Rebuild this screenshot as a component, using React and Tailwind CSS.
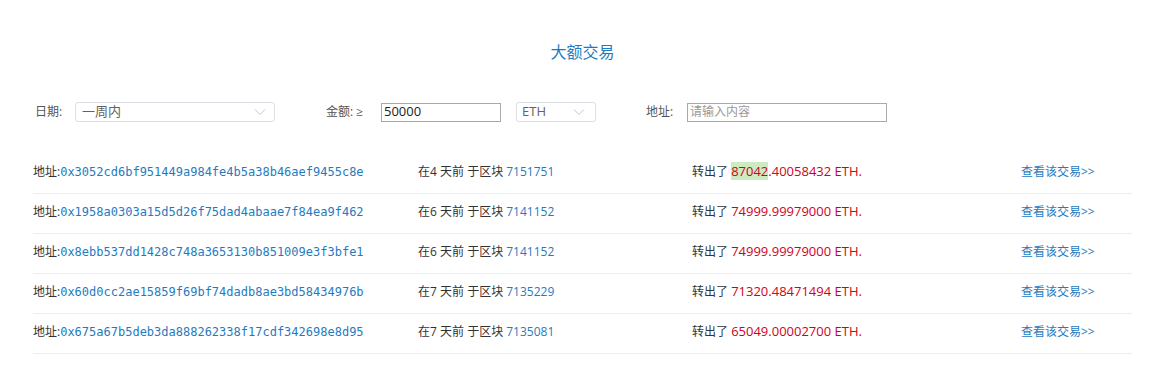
import React from 'react';

const rows = [
    { addr: '0x3052cd6bf951449a984fe4b5a38b46aef9455c8e', days: 4, block: '7151751', hi: '87042', rest: '.40058432 ETH.' },
    { addr: '0x1958a0303a15d5d26f75dad4abaae7f84ea9f462', days: 6, block: '7141152', hi: '', rest: '74999.99979000 ETH.' },
    { addr: '0x8ebb537dd1428c748a3653130b851009e3f3bfe1', days: 6, block: '7141152', hi: '', rest: '74999.99979000 ETH.' },
    { addr: '0x60d0cc2ae15859f69bf74dadb8ae3bd58434976b', days: 7, block: '7135229', hi: '', rest: '71320.48471494 ETH.' },
    { addr: '0x675a67b5deb3da888262338f17cdf342698e8d95', days: 7, block: '7135081', hi: '', rest: '65049.00002700 ETH.' },
];

const cjk = "font-['Open_Sans','Noto_Sans_CJK_SC',sans-serif]";

const Chevron = () => (
    <svg className="w-[12px] h-[8px]" viewBox="0 0 12 8" fill="none" stroke="#c0c4cc" strokeWidth="1">
        <polyline points="1,1.5 6,6.5 11,1.5" />
    </svg>
);

const App = () => {
    return (
        <div className={`bg-white w-[1153px] h-[380px] text-[#333] ${cjk}`}>
            <h1 className="pt-[40px] pl-[12px] text-center text-[16px] leading-[24px] text-[#1f7bc1]">大额交易</h1>

            <div className="mt-[38px] flex items-center h-[20px] text-[12px] text-[#555]">
                <span className="ml-[35px] w-[40px]">日期:</span>
                <div className="w-[200px] h-[20px] border border-[#dcdfe6] rounded-[3px] flex items-center justify-between pl-[6px] pr-[8px] text-[#606266] text-[13px]">
                    <span>一周内</span>
                    <Chevron />
                </div>
                <span className="ml-[51px] w-[55px]">金额: ≥</span>
                <div className="w-[120px] h-[19px] border border-[#a9a9a9] flex items-center pl-[2px] text-[13px] text-[#222]">50000</div>
                <div className="ml-[15px] w-[80px] h-[20px] border border-[#dcdfe6] rounded-[3px] flex items-center justify-between pl-[5px] pr-[10px] text-[#606266] text-[13px]">
                    <span>ETH</span>
                    <Chevron />
                </div>
                <span className="ml-[50px] w-[41px]">地址:</span>
                <div className="w-[200px] h-[19px] border border-[#a9a9a9] flex items-center pl-[2px] text-[12px] text-[#999]">请输入内容</div>
            </div>

            <div className="mt-[32px] ml-[33px] w-[1099px]">
                {rows.map((r) => (
                    <div key={r.addr} className="grid grid-cols-[385px_274px_329px_1fr] items-center h-[40px] pb-[4px] border-b border-[#ebeef5] text-[12px]">
                        <div className="flex items-center">
                            <span className="text-[#333]">地址:</span>
                            <span className="font-['DejaVu_Sans_Mono',monospace] text-[#1f7bc1]">{r.addr}</span>
                        </div>
                        <div className="text-[#333]">
                            在{r.days} 天前 于区块 <span className="text-[#1f7bc1]">{r.block}</span>
                        </div>
                        <div className="text-[#333]">
                            转出了 <span className="text-[13px] text-[#d0021b]">{r.hi && <span className="bg-[#cdeac0]">{r.hi}</span>}{r.rest}</span>
                        </div>
                        <div className="text-[#1f7bc1]">查看该交易&gt;&gt;</div>
                    </div>
                ))}
            </div>
        </div>
    );
};

export default App;
